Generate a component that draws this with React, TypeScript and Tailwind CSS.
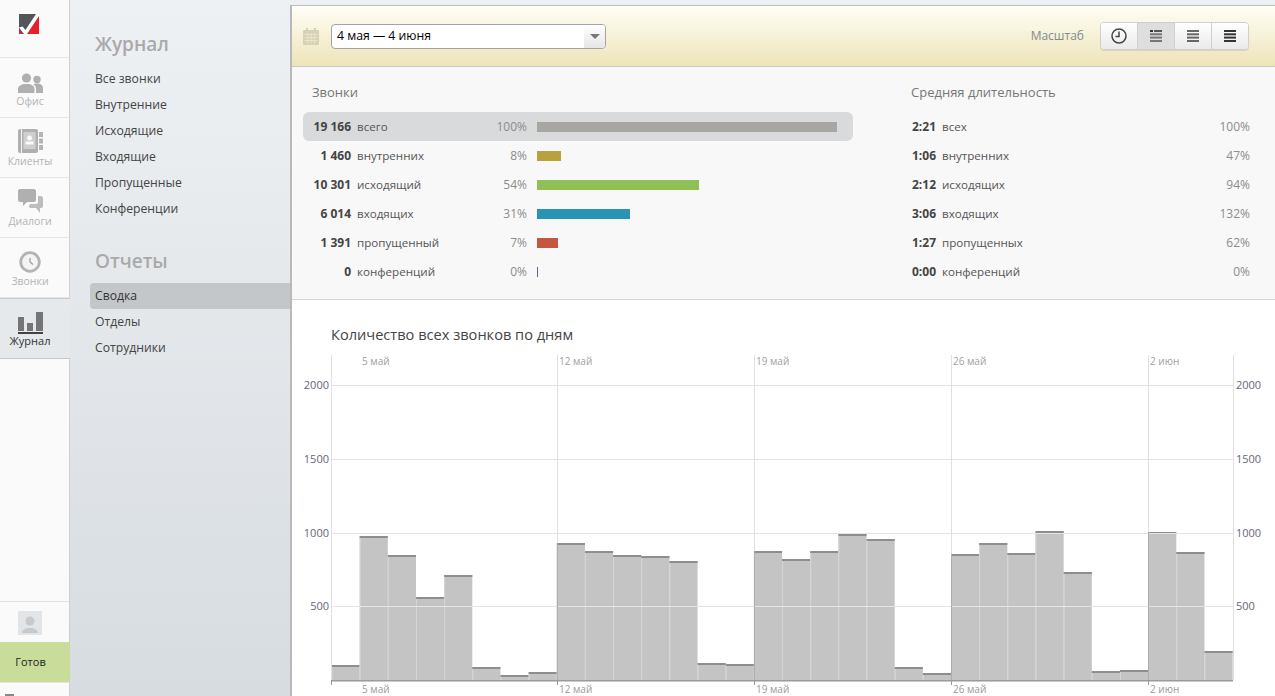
const font = "font-['Open_Sans','Liberation_Sans',sans-serif]";

const journalLinks = ["Все звонки", "Внутренние", "Исходящие", "Входящие", "Пропущенные", "Конференции"];
const reportLinks = ["Сводка", "Отделы", "Сотрудники"];

const callRows = [
  { count: "19 166", label: "всего", pct: "100%", width: "w-[300px]", color: "bg-[#a8a6a3]" },
  { count: "1 460", label: "внутренних", pct: "8%", width: "w-[24px]", color: "bg-[#b9a23e]" },
  { count: "10 301", label: "исходящий", pct: "54%", width: "w-[162px]", color: "bg-[#8fc056]" },
  { count: "6 014", label: "входящих", pct: "31%", width: "w-[93px]", color: "bg-[#2a94b4]" },
  { count: "1 391", label: "пропущенный", pct: "7%", width: "w-[21px]", color: "bg-[#c4573f]" },
  { count: "0", label: "конференций", pct: "0%", width: "w-px", color: "bg-[#7a5a90]" },
];

const durationRows = [
  { time: "2:21", label: "всех", pct: "100%" },
  { time: "1:06", label: "внутренних", pct: "47%" },
  { time: "2:12", label: "исходящих", pct: "94%" },
  { time: "3:06", label: "входящих", pct: "132%" },
  { time: "1:27", label: "пропущенных", pct: "62%" },
  { time: "0:00", label: "конференций", pct: "0%" },
];

// y of the top edge of each daily bar, page coordinates
const barTops = [
  665, 536, 555, 597, 575, 667, 675, 672, 543, 551, 555, 556, 561, 663, 664, 551, 559, 551, 534, 539, 667, 673, 554,
  543, 553, 531, 572, 671, 670, 532, 552, 651,
];
const weeks = [
  { x: 331, label: "5 май", labelX: 362 },
  { x: 557, label: "12 май", labelX: 559 },
  { x: 754, label: "19 май", labelX: 756 },
  { x: 951, label: "26 май", labelX: 953 },
  { x: 1148, label: "2 июн", labelX: 1150 },
];
const weekStartBars = [8, 15, 22, 29];
const levels = [
  { y: 385, label: "2000" },
  { y: 459, label: "1500" },
  { y: 533, label: "1000" },
  { y: 606, label: "500" },
];

function Logo() {
  return (
    <svg width="20" height="20" viewBox="0 0 20 20">
      <rect width="20" height="20" fill="#55565a" />
      <polygon points="0,15 0,20 4,20" fill="#e8202a" />
      <polygon points="20,2 20,20 8,20" fill="#e8202a" />
      <polygon points="0,13.500 3.500,12.500 6.500,16 17,0 20,0 20,2 8,20 5,20" fill="#fff" />
    </svg>
  );
}

function OfficeIcon() {
  return (
    <svg width="25" height="20" viewBox="0 0 25 20" fill="#b0b0b0">
      <circle cx="8.5" cy="5" r="4.6" />
      <path d="M0 20v-4c0-3 3-4 5.500-5h6c2.500 1 5 2 5 5v4z" />
      <circle cx="19" cy="6.500" r="3.700" />
      <path d="M18 20v-4.500c0-1.500-1-3-2.500-4l1.500-1h4c2 .8 4 1.800 4 4.500v5z" />
    </svg>
  );
}

function ClientsIcon() {
  return (
    <svg width="25" height="24" viewBox="0 0 25 24">
      <rect x="0" y="0" width="20" height="24" rx="2" fill="#b0b0b0" />
      <rect x="3" y="0" width="1" height="24" fill="#f3f3f3" />
      <rect x="5.500" y="3" width="12" height="17" fill="#cfcfcf" />
      <circle cx="11.500" cy="9" r="2.500" fill="#fafafa" />
      <rect x="7.500" y="12.500" width="8" height="3" fill="#fafafa" />
      <rect x="21" y="3" width="4" height="5" fill="#b5b5b5" />
      <rect x="21" y="9.500" width="4" height="5" fill="#b5b5b5" />
      <rect x="21" y="16" width="4" height="5" fill="#b5b5b5" />
    </svg>
  );
}

function DialogsIcon() {
  return (
    <svg width="25" height="24" viewBox="0 0 25 24">
      <path d="M2 0h14c1 0 2 1 2 2v9c0 1-1 2-2 2H9l-4 4v-4H2c-1 0-2-1-2-2V2c0-1 1-2 2-2z" fill="#b0b0b0" />
      <path d="M20 7h3c1 0 2 1 2 2v8c0 1-1 2-2 2h-1v5l-4-5h-5c-1 0-2-.5-2-2l1-2h6c1.500 0 2-1 2-2z" fill="#bdbdbd" />
    </svg>
  );
}

function CallsIcon() {
  return (
    <svg width="22" height="22" viewBox="0 0 22 22" fill="none">
      <circle cx="11" cy="11" r="9.300" fill="#f4f4f4" stroke="#b4b4b4" strokeWidth="2.800" />
      <path d="M11 7l0 4 3 2.500" stroke="#9a9a9a" strokeWidth="1.200" />
    </svg>
  );
}

function JournalIcon() {
  return (
    <svg width="25" height="22" viewBox="0 0 25 22" fill="#757575">
      <rect x="0" y="5" width="6" height="14" />
      <rect x="9" y="11" width="6" height="8" />
      <rect x="18" y="0" width="7" height="19" />
      <rect x="0" y="20" width="25" height="2" fill="#444" />
    </svg>
  );
}

function RailItem({ label, icon, active }: { label: string; icon: React.ReactNode; active?: boolean }) {
  return (
    <div
      className={
        active
          ? "flex h-[61px] w-[70px] flex-col items-center justify-end border-y border-[#c8c8c8] bg-[#e6e9ec] pr-[10px] pb-[10px]"
          : "flex h-[60px] w-[70px] flex-col items-center justify-end border-r border-b border-r-[#cfcfcf] border-b-[#e6e6e6] pr-[9px] pb-[9px]"
      }
    >
      {icon}
      <span
        className={
          active ? "text-[11px] leading-[14px] text-[#333]" : "mt-px text-[10.5px] leading-[14px] text-[#b4b4b4]"
        }
      >
        {label}
      </span>
    </div>
  );
}

function LinesIcon({ color, first }: { color: string; first?: boolean }) {
  return (
    <svg width="12" height="12" viewBox="0 0 12 12" fill={color}>
      {first ? (
        <>
          <rect x="0" y="0" width="3" height="2" fill="#333" />
          <rect x="4" y="0" width="8" height="2" fill="#555" />
        </>
      ) : (
        <rect x="0" y="0" width="12" height="2" />
      )}
      <rect x="0" y="3.300" width="12" height="2" />
      <rect x="0" y="6.600" width="12" height="2" />
      <rect x="0" y="10" width="12" height="2" />
    </svg>
  );
}

function CalendarIcon() {
  return (
    <svg width="16" height="17" viewBox="0 0 16 17" fill="#d5d2b8">
      <rect x="0" y="2" width="16" height="15" rx="1" />
      <rect x="3" y="0" width="2" height="3" />
      <rect x="11" y="0" width="2" height="3" />
      <g fill="#efe9c9">
        <rect x="1.500" y="6" width="13" height="0.800" />
        <rect x="1.500" y="9" width="13" height="0.800" />
        <rect x="1.500" y="12" width="13" height="0.800" />
        <rect x="4.500" y="5" width="0.800" height="10.500" />
        <rect x="7.700" y="5" width="0.800" height="10.500" />
        <rect x="10.900" y="5" width="0.800" height="10.500" />
      </g>
    </svg>
  );
}

function Header() {
  return (
    <div className="flex h-[61px] items-center border-b border-[#c9c9c9] bg-gradient-to-b from-[#fffef6] to-[#eee4b8] pr-[26px] pl-[11px]">
      <CalendarIcon />
      <div className="ml-[12px] flex h-[25px] w-[275px] items-center justify-between overflow-hidden rounded-[4px] border border-[#a3a3a3] bg-white">
        <span className="pt-px pl-[5px] text-[12.25px] text-black">4 мая — 4 июня</span>
        <div className="flex h-full w-[21px] items-center justify-center bg-gradient-to-b from-white to-[#e6e6e6]">
          <div className="h-0 w-0 border-x-[5px] border-t-[5px] border-x-transparent border-t-[#777]" />
        </div>
      </div>
      <span className="mr-[16px] ml-auto text-[12px] text-[#7f8c8c]">Масштаб</span>
      <div className="flex h-[28px] w-[149px] overflow-hidden rounded-[4px] border border-[#cfcfcf] shadow-[0_1px_1px_rgba(0,0,0,0.1)]">
        <div className="flex flex-1 items-center justify-center border-r border-[#cfcfcf] bg-gradient-to-b from-white to-[#eaeaea]">
          <svg width="16" height="16" viewBox="0 0 16 16" fill="none" stroke="#444" strokeWidth="1.500">
            <circle cx="8" cy="8" r="7" />
            <path d="M8 3.500V8.500H4.500" />
          </svg>
        </div>
        <div className="flex flex-1 items-center justify-center border-r border-[#cfcfcf] bg-[#dedede]">
          <LinesIcon color="#777" first />
        </div>
        <div className="flex flex-1 items-center justify-center border-r border-[#cfcfcf] bg-gradient-to-b from-white to-[#eaeaea]">
          <LinesIcon color="#666" />
        </div>
        <div className="flex flex-1 items-center justify-center bg-gradient-to-b from-white to-[#eaeaea]">
          <LinesIcon color="#333" />
        </div>
      </div>
    </div>
  );
}

function Stats() {
  return (
    <div className="flex h-[233px] border-b border-[#d6d6d6] bg-[#f8f8f8] pl-[11px]">
      <div className="w-[550px]">
        <div className="mt-[17px] mb-[12px] pl-[9px] text-[13px] leading-[16px] text-[#777]">Звонки</div>
        {callRows.map((row, i) => (
          <div
            key={row.label}
            className={
              i === 0
                ? "flex h-[29px] items-center rounded-[6px] bg-[#d9dadb] text-[12px]"
                : "flex h-[29px] items-center text-[12px]"
            }
          >
            <span className="w-[48px] text-right font-bold whitespace-nowrap text-[#444]">{row.count}</span>
            <span className="ml-[6px] w-[130px] text-[11.6px] text-[#555]">{row.label}</span>
            <span className="w-[40px] text-right text-[#8c8c8c]">{row.pct}</span>
            <div className={`ml-[10px] h-[10px] ${row.width} ${row.color}`} />
          </div>
        ))}
      </div>
      <div className="ml-[58px] w-[339px]">
        <div className="mt-[17px] mb-[12px] text-[13px] leading-[16px] text-[#777]">Средняя длительность</div>
        {durationRows.map((row) => (
          <div key={row.label} className="flex h-[29px] items-center text-[12px]">
            <span className="w-[25px] text-right font-bold text-[#444]">{row.time}</span>
            <span className="ml-[6px] text-[11.6px] text-[#555]">{row.label}</span>
            <span className="ml-auto text-[#8c8c8c]">{row.pct}</span>
          </div>
        ))}
      </div>
    </div>
  );
}

function Chart() {
  const pitch = 28.16;
  const left = 331.5;
  return (
    <svg className="block" width="983" height="346" viewBox="292 350 983 346" fontFamily="'Open Sans','Liberation Sans',sans-serif">
      {barTops.map((top, i) => (
        <g key={i}>
          <rect x={left + i * pitch} y={top} width={pitch} height={680 - top} fill="#c4c4c4" />
          <rect x={left + i * pitch} y={top} width={pitch} height={2} fill="#8e8e8e" />
          <rect x={left + i * pitch} y={top + 2} width={1} height={678 - top} fill="#d6d6d6" />
        </g>
      ))}
      {levels.map((l) => (
        <g key={l.y}>
          <rect x={331} y={l.y} width={902} height={1} fill="#e4e4e4" />
          <text x={329} y={l.y + 4} textAnchor="end" fontSize="11" fill="#667">
            {l.label}
          </text>
          <text x={1236} y={l.y + 4} fontSize="11" fill="#667">
            {l.label}
          </text>
        </g>
      ))}
      {weeks.map((w) => (
        <g key={w.x}>
          <rect x={w.x} y={355} width={1} height={325} fill="#e0e0e0" />
          <text x={w.labelX} y={365} fontSize="10" fill="#a0a0a0">
            {w.label}
          </text>
          <text x={w.labelX} y={693} fontSize="10" fill="#9a9a9a">
            {w.label}
          </text>
          <rect x={w.x} y={680} width={1} height={5} fill="#999" />
        </g>
      ))}
      {weekStartBars.map((bar, i) => (
        <rect key={bar} x={weeks[i + 1].x} y={barTops[bar]} width={1} height={680 - barTops[bar]} fill="#adadad" />
      ))}
      <rect x={1233} y={355} width={1} height={325} fill="#e0e0e0" />
      <rect x={331} y={680} width={902} height={1.500} fill="#9a9a9a" />
    </svg>
  );
}

export default function App() {
  return (
    <div className={`${font} flex h-[696px] w-[1275px] overflow-hidden bg-gradient-to-b from-[#eef1f4] to-[#d7dce0]`}>
      <div className="flex w-[70px] shrink-0 flex-col">
        <div className="w-[70px] bg-[#fafafa]">
          <div className="flex h-[58px] justify-center border-r border-b border-r-[#cfcfcf] border-b-[#e6e6e6] pt-[14px] pr-[11px]">
            <Logo />
          </div>
          <RailItem label="Офис" icon={<OfficeIcon />} />
          <RailItem label="Клиенты" icon={<ClientsIcon />} />
          <RailItem label="Диалоги" icon={<DialogsIcon />} />
          <RailItem label="Звонки" icon={<CallsIcon />} />
        </div>
        <RailItem label="Журнал" icon={<JournalIcon />} active />
        <div className="flex-1 border-r border-[#cfcfcf] bg-[#fafafa]" />
        <div className="flex h-[41px] items-center justify-center border-t border-r border-t-[#e3e3e3] border-r-[#cfcfcf] bg-[#fafafa] pt-[2px] pr-[9px]">
          <div className="flex h-[24px] w-[24px] items-end justify-center bg-[#e2e5e7]">
            <svg width="16" height="20" viewBox="0 0 16 20" fill="#c6cacd">
              <circle cx="8" cy="6" r="4.500" />
              <path d="M0 18c0-3 3-4 5.500-5h5c2.500 1 5.500 2 5.500 5z" />
            </svg>
          </div>
        </div>
        <div className="flex h-[40px] items-center justify-center bg-[#c9dc9a] pr-[9px] text-[11px] text-[#222]">Готов</div>
        <div className="h-[14px] border-t border-r border-t-[#e3e3e3] border-r-[#cfcfcf] bg-[#fafafa] pt-[11px] pl-[5px]">
          <div className="h-[2px] w-[9px] bg-[#888]" />
        </div>
      </div>

      <div className="w-[220px] shrink-0 pt-[29px] pr-0 pl-[20px]">
        <div className="pl-[5px] text-[19px] leading-[30px] font-semibold text-[#a9a9a9]">Журнал</div>
        <div className="mt-[7px] mb-[24px]">
          {journalLinks.map((link) => (
            <div key={link} className="pl-[5px] text-[12.2px] leading-[26px] text-[#444]">
              {link}
            </div>
          ))}
        </div>
        <div className="pl-[5px] text-[19px] leading-[30px] font-semibold text-[#a9a9a9]">Отчеты</div>
        <div className="mt-[7px]">
          {reportLinks.map((link, i) => (
            <div
              key={link}
              className={
                i === 0
                  ? "rounded-l-[4px] bg-[#c3c7ca] pl-[5px] text-[12.2px] leading-[26px] text-[#333]"
                  : "pl-[5px] text-[12.2px] leading-[26px] text-[#444]"
              }
            >
              {link}
            </div>
          ))}
        </div>
      </div>

      <div className="mt-[5px] h-[691px] w-[985px] shrink-0 border-t border-l-2 border-t-[#bdbdbd] border-l-[#b9b9b9] bg-white">
        <Header />
        <Stats />
        <div className="h-[50px] pt-[24px] pl-[39px] text-[14.6px] leading-[20px] text-[#444]">Количество всех звонков по дням</div>
        <Chart />
      </div>
    </div>
  );
}
